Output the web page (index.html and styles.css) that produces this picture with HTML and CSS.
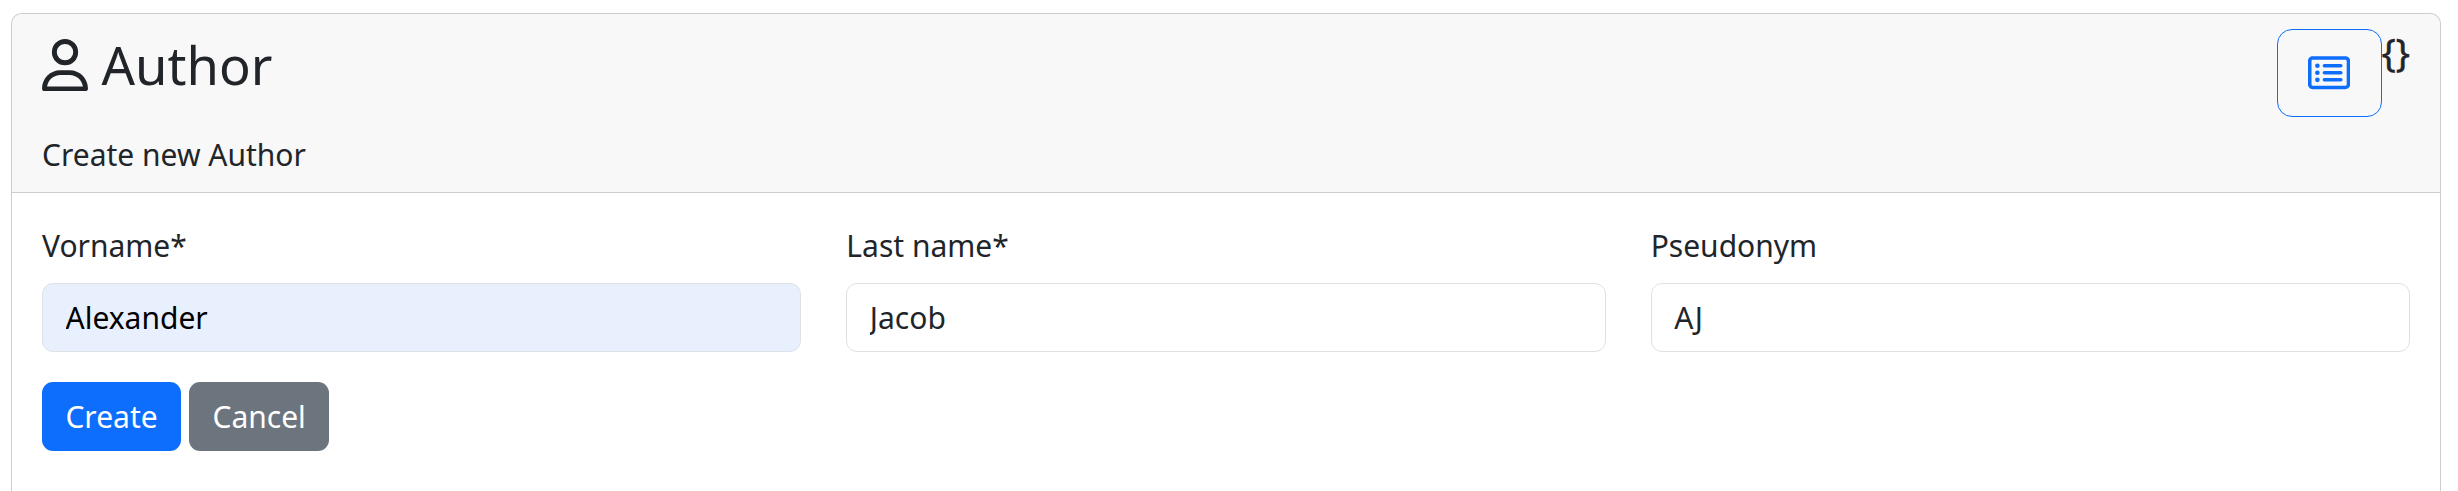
FILE: index.html
```html
<!DOCTYPE html>
<html lang="en">
<head>
<meta charset="utf-8">
<title>Author</title>
<link rel="stylesheet" href="styles.css">
</head>
<body>
<main class="card">
  <header class="card-header">
    <div class="title-row">
      <h1 class="title">
        <svg class="icon-user" viewBox="0 0 448 512" fill="currentColor" aria-hidden="true"><path d="M304 128a80 80 0 1 0 -160 0 80 80 0 1 0 160 0zM96 128a128 128 0 1 1 256 0A128 128 0 1 1 96 128zM49.3 464H398.7c-8.9-63.3-63.3-112-129-112H178.3c-65.7 0-120.1 48.7-129 112zM0 482.3C0 383.8 79.8 304 178.3 304h91.4C368.2 304 448 383.8 448 482.3c0 16.4-13.3 29.7-29.7 29.7H29.7C13.3 512 0 498.7 0 482.3z"/></svg>
        <span>Author</span>
      </h1>
      <div class="actions">
        <button class="list-button" type="button" aria-label="List">
          <svg class="icon-list" viewBox="0 0 576 512" fill="currentColor" aria-hidden="true"><path d="M64 80c-8.8 0-16 7.2-16 16V416c0 8.8 7.2 16 16 16H512c8.8 0 16-7.2 16-16V96c0-8.8-7.2-16-16-16H64zM0 96C0 60.7 28.7 32 64 32H512c35.3 0 64 28.7 64 64V416c0 35.3-28.7 64-64 64H64c-35.3 0-64-28.7-64-64V96zm96 64a32 32 0 1 1 64 0 32 32 0 1 1 -64 0zm104 0c0-13.3 10.7-24 24-24H448c13.3 0 24 10.7 24 24s-10.7 24-24 24H224c-13.3 0-24-10.7-24-24zm0 96c0-13.3 10.7-24 24-24H448c13.3 0 24 10.7 24 24s-10.7 24-24 24H224c-13.3 0-24-10.7-24-24zm0 96c0-13.3 10.7-24 24-24H448c13.3 0 24 10.7 24 24s-10.7 24-24 24H224c-13.3 0-24-10.7-24-24zM96 256a32 32 0 1 1 64 0 32 32 0 1 1 -64 0zM96 352a32 32 0 1 1 64 0 32 32 0 1 1 -64 0z"/></svg>
        </button>
        <span class="braces">{}</span>
      </div>
    </div>
    <div>Create new Author</div>
  </header>
  <form class="card-body">
    <div class="fields">
      <div class="field">
        <label for="first">Vorname*</label>
        <input class="autofilled" id="first" type="text" value="Alexander">
      </div>
      <div class="field">
        <label for="last">Last name*</label>
        <input id="last" type="text" value="Jacob">
      </div>
      <div class="field">
        <label for="pseudonym">Pseudonym</label>
        <input id="pseudonym" type="text" value="AJ">
      </div>
    </div>
    <div class="buttons">
      <button class="btn primary" type="button">Create</button>
      <button class="btn secondary" type="button">Cancel</button>
    </div>
  </form>
</main>
</body>
</html>
```
FILE: styles.css
```css
* { box-sizing: border-box; }
html { height: 100%; overflow: hidden; }
body {
  height: 100%;
  margin: 0;
  padding: 13px 17px 0 11px;
  overflow: hidden;
  background: #fff;
  color: #212529;
  font: 30px/1.5 "Noto Sans", sans-serif;
}
.card {
  height: 100%;
  border: 1px solid #cccdce;
  border-bottom: 0;
  border-radius: 11px 11px 0 0;
  overflow: hidden;
}
.card-header {
  padding: 15px 30px 14.5px;
  background: #f8f8f8;
  border-bottom: 1px solid #cccdce;
}
.title-row {
  display: flex;
  justify-content: space-between;
  align-items: flex-start;
  height: 103px;
}
.title {
  display: flex;
  align-items: flex-start;
  gap: 13.5px;
  margin: 0;
  font-size: 52.5px;
  font-weight: 400;
  line-height: 71px;
}
.icon-user { width: 46px; height: 52.5px; margin-top: 9.5px; }
.actions { display: flex; align-items: flex-start; }
.list-button {
  display: flex;
  align-items: center;
  justify-content: center;
  width: 105px;
  height: 88px;
  padding: 0;
  border: 1px solid #0d6efd;
  border-radius: 15px;
  background: transparent;
  color: #0d6efd;
}
.icon-list { width: 42.2px; height: 37.5px; }
.braces {
  width: 28.5px;
  font-size: 37.5px;
  line-height: 45px;
  -webkit-text-stroke: 0.4px currentColor;
}
.card-body { padding: 30px; }
.fields { display: grid; grid-template-columns: repeat(3, 1fr); gap: 45px; }
.field { display: flex; flex-direction: column; gap: 15px; }
input {
  width: 100%;
  height: 69.5px;
  padding: 11px 22.5px;
  border: 1px solid #dee2e6;
  border-radius: 11px;
  background: #fff;
  color: #212529;
  font: inherit;
}
.autofilled { background: #e8f0fe; color: #000; }
.buttons { display: flex; gap: 8px; margin-top: 30px; }
.btn {
  height: 69px;
  padding: 0 23.4px;
  border: 0;
  border-radius: 11px;
  color: #fff;
  font: inherit;
}
.primary { background: #0d6efd; }
.secondary { background: #6c757d; }
```
